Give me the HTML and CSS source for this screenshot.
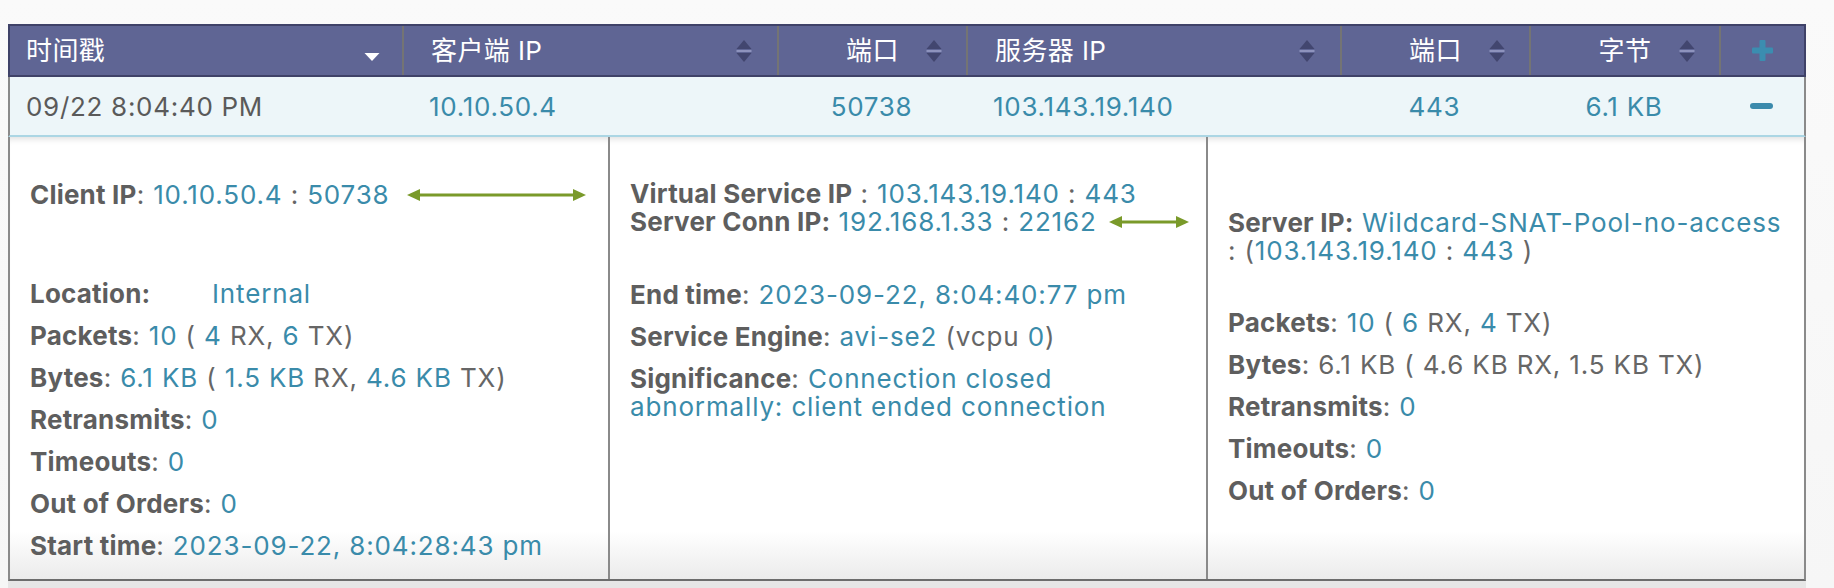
FILE: index.html
```html
<!DOCTYPE html>
<html lang="zh">
<head>
<meta charset="utf-8">
<title>Connection log</title>
<link rel="stylesheet" href="styles.css">
</head>
<body>
<div class="page">
  <div class="table">
    <div class="thead">
      <div class="th th-left th-first">
        <span class="th-label">时间戳</span>
        <svg class="sort" viewBox="0 0 18 28" width="18" height="28"><polygon points="1.5,16 16.5,16 9,24" fill="#ffffff"/></svg>
      </div>
      <div class="th th-left th-wide">
        <span class="th-label">客户端 IP</span>
        <svg class="sort" viewBox="0 0 18 28" width="18" height="28"><polygon points="1.5,12 9,3 16.5,12" fill="#42466f"/><rect x="1.5" y="13" width="15" height="2" fill="#8e93bd"/><polygon points="1.5,16 16.5,16 9,25" fill="#42466f"/></svg>
      </div>
      <div class="th th-center">
        <span class="spacer"></span>
        <span class="th-label">端口</span>
        <svg class="sort" viewBox="0 0 18 28" width="18" height="28"><polygon points="1.5,12 9,3 16.5,12" fill="#42466f"/><rect x="1.5" y="13" width="15" height="2" fill="#8e93bd"/><polygon points="1.5,16 16.5,16 9,25" fill="#42466f"/></svg>
      </div>
      <div class="th th-left th-wide">
        <span class="th-label">服务器 IP</span>
        <svg class="sort" viewBox="0 0 18 28" width="18" height="28"><polygon points="1.5,12 9,3 16.5,12" fill="#42466f"/><rect x="1.5" y="13" width="15" height="2" fill="#8e93bd"/><polygon points="1.5,16 16.5,16 9,25" fill="#42466f"/></svg>
      </div>
      <div class="th th-center">
        <span class="spacer"></span>
        <span class="th-label">端口</span>
        <svg class="sort" viewBox="0 0 18 28" width="18" height="28"><polygon points="1.5,12 9,3 16.5,12" fill="#42466f"/><rect x="1.5" y="13" width="15" height="2" fill="#8e93bd"/><polygon points="1.5,16 16.5,16 9,25" fill="#42466f"/></svg>
      </div>
      <div class="th th-center">
        <span class="spacer"></span>
        <span class="th-label">字节</span>
        <svg class="sort" viewBox="0 0 18 28" width="18" height="28"><polygon points="1.5,12 9,3 16.5,12" fill="#42466f"/><rect x="1.5" y="13" width="15" height="2" fill="#8e93bd"/><polygon points="1.5,16 16.5,16 9,25" fill="#42466f"/></svg>
      </div>
      <div class="th th-action">
        <svg class="plus" viewBox="0 0 21 21" width="21" height="21"><rect x="7.5" y="0" width="6" height="21" rx="1" fill="#3b8db0"/><rect x="0" y="7.5" width="21" height="6" rx="1" fill="#3b8db0"/></svg>
      </div>
    </div>

    <div class="trow">
      <div class="td td-time">09/22 8:04:40 PM</div>
      <div class="td td-left">10.10.50.4</div>
      <div class="td td-center">50738</div>
      <div class="td td-left">103.143.19.140</div>
      <div class="td td-center">443</div>
      <div class="td td-center">6.1 KB</div>
      <div class="td td-action"><span class="minus"></span></div>
    </div>

    <div class="details">
      <div class="dcol dcol-client">
        <div class="item ipblock">
          <b>Client IP</b>: <span class="v">10.10.50.4</span> : <span class="v">50738</span>
          <svg class="arrow arrow-long" viewBox="0 0 179 14" width="179" height="14"><line x1="10" y1="7" x2="169" y2="7" stroke="#7a9a2a" stroke-width="3"/><polygon points="0,7 13,1 13,13" fill="#7a9a2a"/><polygon points="179,7 166,1 166,13" fill="#7a9a2a"/></svg>
        </div>
        <div class="item"><b class="loc-label">Location:</b><span class="v">Internal</span></div>
        <div class="item"><b>Packets</b>: <span class="v">10</span> ( <span class="v">4</span> RX, <span class="v">6</span> TX)</div>
        <div class="item"><b>Bytes</b>: <span class="v">6.1 KB</span> ( <span class="v">1.5 KB</span> RX, <span class="v">4.6 KB</span> TX)</div>
        <div class="item"><b>Retransmits</b>: <span class="v">0</span></div>
        <div class="item"><b>Timeouts</b>: <span class="v">0</span></div>
        <div class="item"><b>Out of Orders</b>: <span class="v">0</span></div>
        <div class="item"><b>Start time</b>: <span class="v">2023-09-22, 8:04:28:43 pm</span></div>
      </div>

      <div class="dcol dcol-engine">
        <div class="item ipblock">
          <div><b>Virtual Service IP</b> : <span class="v">103.143.19.140</span> : <span class="v">443</span></div>
          <div><b>Server Conn IP:</b> <span class="v">192.168.1.33</span> : <span class="v">22162</span>
            <svg class="arrow arrow-short" viewBox="0 0 80 14" width="80" height="14"><line x1="10" y1="7" x2="70" y2="7" stroke="#7a9a2a" stroke-width="3"/><polygon points="0,7 13,1 13,13" fill="#7a9a2a"/><polygon points="80,7 67,1 67,13" fill="#7a9a2a"/></svg>
          </div>
        </div>
        <div class="item"><b>End time</b>: <span class="v">2023-09-22, 8:04:40:77 pm</span></div>
        <div class="item"><b>Service Engine</b>: <span class="v">avi-se2</span> (vcpu <span class="v">0</span>)</div>
        <div class="item"><b>Significance</b>: <span class="v">Connection closed<br>abnormally: client ended connection</span></div>
      </div>

      <div class="dcol dcol-server">
        <div class="item ipblock">
          <b>Server IP:</b> <span class="v">Wildcard-SNAT-Pool-no-access</span><br>: (<span class="v">103.143.19.140</span> : <span class="v">443</span> )
        </div>
        <div class="item"><b>Packets</b>: <span class="v">10</span> ( <span class="v">6</span> RX, <span class="v">4</span> TX)</div>
        <div class="item"><b>Bytes</b>: 6.1 KB ( 4.6 KB RX, 1.5 KB TX)</div>
        <div class="item"><b>Retransmits</b>: <span class="v">0</span></div>
        <div class="item"><b>Timeouts</b>: <span class="v">0</span></div>
        <div class="item"><b>Out of Orders</b>: <span class="v">0</span></div>
      </div>
    </div>
    <div class="table-foot"></div>
  </div>
</div>
</body>
</html>
```

FILE: styles.css
```css
* { box-sizing: border-box; }

html, body {
  margin: 0;
  padding: 0;
}

body {
  background: #f7f7f7;
  font-family: "Inter", "Noto Sans CJK SC", sans-serif;
  color: #666;
}

.page {
  width: 1834px;
  height: 588px;
  overflow: hidden;
  padding: 24px 0 0 8px;
  background: linear-gradient(#fafafa, #f6f6f6);
}

.table {
  width: 1798px;
}

/* header */
.thead {
  display: grid;
  grid-template-columns: 392px 375px 189px 374px 189px 190px 85px;
  height: 53px;
  background: #5f6594;
  border: 2px solid #3f4268;
}

.th {
  display: flex;
  align-items: center;
  color: #ffffff;
  font-family: "Inter", "Noto Sans CJK SC", sans-serif;
  font-size: 26px;
  letter-spacing: 0.4px;
  line-height: 1;
  border-left: 2px solid #747474;
}

.th-first {
  border-left: 0;
  justify-content: space-between;
  padding: 0 21px 0 16px;
}

.th-wide {
  justify-content: space-between;
  padding: 0 24px 0 27px;
}

.th-center {
  display: grid;
  grid-template-columns: 1fr auto 1fr;
  align-items: center;
  padding: 0 23px;
}

.th-center .sort {
  justify-self: end;
}

.th-label {
  white-space: nowrap;
}

.sort {
  display: block;
  flex: none;
}

.th-action {
  justify-content: center;
}

.plus {
  display: block;
}

/* row */
.trow {
  display: grid;
  grid-template-columns: 392px 375px 189px 374px 189px 190px 85px;
  height: 60px;
  background: #edf6f9;
  border-left: 2px solid #8a8a8a;
  border-right: 2px solid #8a8a8a;
  border-bottom: 2px solid #abd6e4;
  font-size: 26px;
  letter-spacing: 0.7px;
  color: #3a8baa;
}

.td {
  display: flex;
  align-items: center;
  white-space: nowrap;
}

.td-time {
  color: #5a5a5a;
  padding-left: 16px;
}

.td-left {
  padding-left: 27px;
}

.td-center {
  justify-content: center;
}

.td-action {
  justify-content: center;
}

.minus {
  display: block;
  width: 23px;
  height: 6px;
  border-radius: 3px;
  background: #3b8aac;
}

/* details */
.details {
  display: grid;
  grid-template-columns: 598px 598px 598px;
  height: 444px;
  border-left: 2px solid #8a8a8a;
  border-right: 2px solid #8a8a8a;
  border-bottom: 2px solid #6c6c6c;
  background: linear-gradient(#ffffff 0, #ffffff calc(100% - 48px), #ebebeb 100%);
  box-shadow: inset 0 7px 6px -5px rgba(0, 0, 0, 0.13);
}

.dcol {
  padding: 44px 20px 0 20px;
  font-size: 26px;
  line-height: 28px;
  color: #666;
  letter-spacing: 0.85px;
}

.dcol + .dcol {
  border-left: 2px solid #8a8a8a;
}

.dcol b {
  font-weight: 700;
  color: #5e5e5e;
  letter-spacing: 0.2px;
}

.dcol .v {
  color: #3a8baa;
}

.item {
  margin-bottom: 14px;
  white-space: nowrap;
}

.dcol-client .ipblock {
  margin-bottom: 71px;
}

.dcol-engine {
  padding-top: 43px;
}

.dcol-engine .ipblock {
  margin-bottom: 45px;
}

.dcol-server {
  padding-top: 72px;
}

.dcol-server .ipblock {
  margin-bottom: 44px;
}

.loc-label {
  display: inline-block;
  width: 182px;
}

.arrow {
  vertical-align: middle;
  position: relative;
  top: -2px;
}

.arrow-long {
  margin-left: 9px;
}

.arrow-short {
  margin-left: 4px;
}

.table-foot {
  height: 7px;
  background: #e6e6e6;
}
```
